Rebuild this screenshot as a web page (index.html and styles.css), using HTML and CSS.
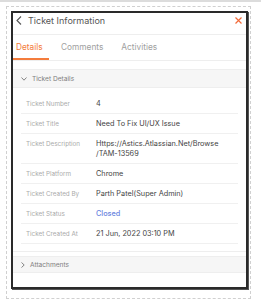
FILE: index.html
```html
<!DOCTYPE html>
<html lang="en">
<head>
    <meta charset="UTF-8">
    <meta name="viewport" content="width=device-width, initial-scale=1.0">
    <title>Ticket Information</title>
    <link rel="stylesheet" href="styles.css">
</head>
<body>

    <div class="top-line"></div>

    <div class="frame">
        <div class="panel">
            <!-- Header -->
            <div class="panel-header">
                <svg class="back-icon" width="6" height="9" viewBox="0 0 6 9">
                    <polyline points="5,0.5 1,4.5 5,8.5" fill="none" stroke="#555" stroke-width="1.1"/>
                </svg>
                <span class="panel-title">Ticket Information</span>
                <svg class="close-icon" width="7" height="7" viewBox="0 0 7 7">
                    <path d="M0.5 0.5 L6.5 6.5 M6.5 0.5 L0.5 6.5" stroke="#f26b3a" stroke-width="1.2"/>
                </svg>
            </div>

            <!-- Tabs -->
            <div class="tabs">
                <span class="tab active">Details</span>
                <span class="tab">Comments</span>
                <span class="tab">Activities</span>
            </div>

            <!-- Ticket details section -->
            <div class="section">
                <div class="section-head">
                    <svg class="chev" width="6" height="4" viewBox="0 0 6 4">
                        <polyline points="0.5,0.5 3,3.2 5.5,0.5" fill="none" stroke="#777" stroke-width="0.9"/>
                    </svg>
                    <span>Ticket Details</span>
                </div>
                <div class="section-body">
                    <div class="row">
                        <div class="label">Ticket Number</div>
                        <div class="value">4</div>
                    </div>
                    <div class="row">
                        <div class="label">Ticket Title</div>
                        <div class="value">Need To Fix UI/UX Issue</div>
                    </div>
                    <div class="row">
                        <div class="label">Ticket Description</div>
                        <div class="value">Https://Astics.Atlassian.Net/Browse<br>/TAM-13569</div>
                    </div>
                    <div class="row">
                        <div class="label">Ticket Platform</div>
                        <div class="value">Chrome</div>
                    </div>
                    <div class="row">
                        <div class="label">Ticket Created By</div>
                        <div class="value">Parth Patel(Super Admin)</div>
                    </div>
                    <div class="row">
                        <div class="label">Ticket Status</div>
                        <div class="value status">Closed</div>
                    </div>
                    <div class="row">
                        <div class="label">Ticket Created At</div>
                        <div class="value">21 Jun, 2022 03:10 PM</div>
                    </div>
                </div>
            </div>

            <!-- Attachments -->
            <div class="section-head attachments">
                <svg class="chev" width="4" height="6" viewBox="0 0 4 6">
                    <polyline points="0.5,0.5 3.2,3 0.5,5.5" fill="none" stroke="#777" stroke-width="0.9"/>
                </svg>
                <span>Attachments</span>
            </div>
        </div>
    </div>

</body>
</html>
```

FILE: styles.css
```css
body {
    margin: 0;
    background: white;
    font-family: 'Inter', 'Noto Sans', sans-serif;
    color: #444;
}

.top-line {
    height: 2px;
    background: #dcdcdc;
}

.frame {
    width: 237px;
    height: 285px;
    margin: 4px 0 0 6px;
    padding: 4px 2px 2px 4px;
    border: 1px dashed #d0d0d0;
}

.panel {
    height: 278px;
    border: 2px solid #2a2a2a;
    box-shadow: 1px 1px 0 #555;
    background: white;
    box-sizing: border-box;
}

/* Header */
.panel-header {
    display: flex;
    align-items: center;
    height: 14px;
    padding: 0 4px 7px 3px;
    border-bottom: 1px solid #eee;
}

.back-icon {
    margin-right: 6px;
}

.panel-title {
    font-size: 9px;
    font-weight: 400;
    color: #555;
    flex: 1;
}

/* Tabs */
.tabs {
    display: flex;
    height: 25px;
    border-bottom: 1px solid #eee;
}

.tab {
    font-size: 8.3px;
    color: #a0a0a0;
    padding: 7px 0 0;
    margin-left: 18px;
}

.tab.active {
    color: #f47c3c;
    margin-left: 0;
    padding: 7px 7px 0 3px;
    width: 26px;
    border-bottom: 2px solid #f47c3c;
}

.tab.active + .tab {
    margin-left: 12px;
}

/* Sections */
.section {
    margin-top: 8px;
    border-bottom: 1px solid #eee;
}

.section-head {
    display: flex;
    align-items: center;
    height: 17px;
    padding-left: 8px;
    background: #f6f6f6;
    border-top: 1px solid #eee;
    border-bottom: 1px solid #eee;
    font-size: 6.6px;
    color: #808080;
}

.section-head .chev {
    margin-right: 5px;
}

.section-body {
    padding: 6px 8px 7px 8px;
}

.row {
    display: flex;
    padding: 5px 0 4px 5px;
    border-bottom: 1px solid #f0f0f0;
    line-height: 10px;
}

.label {
    width: 70px;
    font-size: 6.3px;
    color: #aaa;
}

.value {
    font-size: 7.3px;
    color: #444;
}

.value.status {
    color: #6a85e0;
    font-weight: 500;
}

.attachments {
    margin-top: 4px;
    height: 15px;
}
```
